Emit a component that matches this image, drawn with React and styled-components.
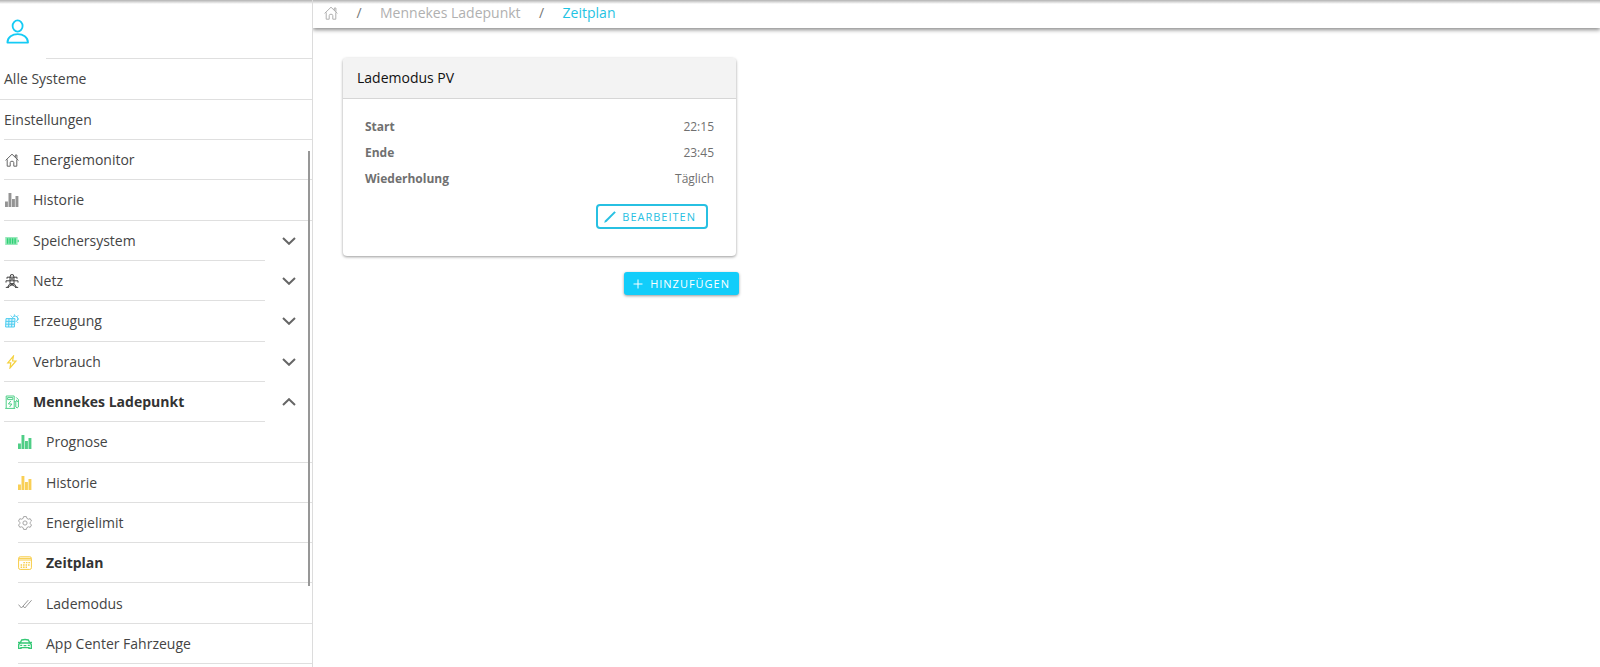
import React, { useState } from "react";

import styled, { createGlobalStyle, css } from "styled-components";

const HomeIcon = () => (
  <Icon viewBox="0 0 14 14" aria-hidden="true">
    <path d="M0.6 7.4 L7 1.2 L13.4 7.4 M10.3 4.2 V2 H11.9 V5.8 M2.2 6.4 V13.2 H5.2 V9.6 Q5.2 8.2 7 8.2 Q8.8 8.2 8.8 9.6 V13.2 H11.8 V6.4" />
  </Icon>
);

const BarsIcon = () => (
  <Icon viewBox="0 0 14 14" $solid aria-hidden="true">
    <rect x="0" y="8.5" width="2.9" height="5.5" />
    <rect x="3.5" y="0" width="2.9" height="14" />
    <rect x="7" y="6" width="2.9" height="8" />
    <rect x="10.5" y="3" width="2.9" height="11" />
  </Icon>
);

const BatteryIcon = () => (
  <Icon viewBox="0 0 14 14" aria-hidden="true">
    <rect x="0.2" y="3" width="12.4" height="8" stroke="none" fill="currentColor" fillOpacity="0.5" />
    <path d="M13.2 5.8 V8.2" />
    <path d="M2.6 4.2 V9.8 M5.1 4.2 V9.8 M7.6 4.2 V9.8 M10.1 4.2 V9.8" strokeWidth="1.5" />
  </Icon>
);

const PylonIcon = () => (
  <Icon viewBox="0 0 14 14" aria-hidden="true">
    <path d="M5 3 L5.8 0.7 H8.2 L9 3 M2 3.2 H12 M1 6.8 H13 M2 3.2 V4.8 M12 3.2 V4.8 M1 6.8 V8.6 M13 6.8 V8.6 M5 3 V9.4 L2.4 13.4 M9 3 V9.4 L11.6 13.4 M5 9.6 H9 M5 9.8 L10.8 12.8 M9 9.8 L3.2 12.8 M0.8 13.4 H4 M10 13.4 H13.2" />
    <path d="M5 3.4 L9 6.6 M9 3.4 L5 6.6" strokeWidth="0.7" />
  </Icon>
);

const SolarIcon = () => (
  <Icon viewBox="0 0 14 14" aria-hidden="true">
    <path d="M1 4.6 H10 L9.4 13 H0.6 Z M0.8 7.4 H9.8 M0.7 10.2 H9.6 M4 4.6 L3.6 13 M7 4.6 L6.6 13" fill="currentColor" fillOpacity="0.2" />
    <path d="M7.4 4 A2.8 2.8 0 1 1 10.6 7.6 M9.4 0.4 V1.8 M5.8 1.6 L6.8 2.8 M13.2 1.4 L12 2.6 M12.6 5 H14 M12 7.8 L13 8.8" />
  </Icon>
);

const BoltIcon = () => (
  <Icon viewBox="0 0 14 14" aria-hidden="true">
    <path d="M8.4 1.2 L2.8 7.8 H5.8 L5 13 L11 6 H7.6 Z" strokeWidth="1.2" />
  </Icon>
);

const ChargerIcon = () => (
  <Icon viewBox="0 0 14 14" aria-hidden="true">
    <path d="M1.2 13.2 V1 H9.2 V13.2 M0.2 13.4 H10.2 M2.6 2.6 H7.8 V4.6 H2.6 Z M9.2 6.6 H10.8 V12 Q12.2 13.8 13.4 12 V4.6 L11.2 2.4 M11.6 4.8 V6.4 H13.4" />
    <path d="M5.8 6 L3.4 9 H6.8 L4.6 12" />
  </Icon>
);

const GearIcon = () => (
  <Icon viewBox="0 0 14 14" aria-hidden="true">
    <path d="M5.6 0.6 H8.4 L8.9 2.4 L10.4 3.2 L12.2 2.7 L13.5 5 L12.2 6.3 V7.7 L13.5 9 L12.2 11.3 L10.4 10.8 L8.9 11.6 L8.4 13.4 H5.6 L5.1 11.6 L3.6 10.8 L1.8 11.3 L0.5 9 L1.8 7.7 V6.3 L0.5 5 L1.8 2.7 L3.6 3.2 L5.1 2.4 Z" />
    <circle cx="7" cy="7" r="2.1" />
  </Icon>
);

const CalendarIcon = () => (
  <Icon viewBox="0 0 14 14" aria-hidden="true">
    <rect x="0.6" y="0.8" width="12.8" height="12.6" rx="1.6" />
    <path d="M0.8 2.4 H13.2 M0.8 4 H13.2" />
    <path d="M5.4 6.6 H12 M2.6 9 H12 M2.6 11.3 H9" strokeWidth="1.4" strokeDasharray="1.5 1" />
  </Icon>
);

const ChecksIcon = () => (
  <Icon viewBox="0 0 14 14" aria-hidden="true">
    <path d="M0.5 7.6 L3.4 11 L10.2 3.2 M5 9 L6.8 11 L13.6 3.2" />
  </Icon>
);

const CarIcon = () => (
  <Icon viewBox="0 0 14 14" aria-hidden="true">
    <path
      d="M2.2 6 L3.6 3 Q7 1.9 10.4 3 L11.8 6 Q13.4 6.6 13.4 8.4 V11.4 H11 V10.6 H3 V11.4 H0.6 V8.4 Q0.6 6.6 2.2 6 H11.8 M0 5.4 H1.8 M12.2 5.4 H14 M2.2 8.4 H4.2 M9.8 8.4 H11.8 M5.6 8.6 H8.4"
      strokeWidth="1.4"
    />
  </Icon>
);

const menuItems = [
  { label: "Energiemonitor", icon: HomeIcon, color: "#666" },
  { label: "Historie", icon: BarsIcon, color: "#949494" },
  { label: "Speichersystem", icon: BatteryIcon, color: "#2fd175", group: true },
  { label: "Netz", icon: PylonIcon, color: "#444", group: true },
  { label: "Erzeugung", icon: SolarIcon, color: "#4fcdf0", group: true },
  { label: "Verbrauch", icon: BoltIcon, color: "#f5d13d", group: true },
  {
    label: "Mennekes Ladepunkt",
    icon: ChargerIcon,
    color: "#4fcf87",
    group: true,
    children: [
      { label: "Prognose", icon: BarsIcon, color: "#4fce86" },
      { label: "Historie", icon: BarsIcon, color: "#f9cf55" },
      { label: "Energielimit", icon: GearIcon, color: "#a5a5a5" },
      { label: "Zeitplan", icon: CalendarIcon, color: "#f7cc45", active: true },
      { label: "Lademodus", icon: ChecksIcon, color: "#999" },
      { label: "App Center Fahrzeuge", icon: CarIcon, color: "#35c876" },
    ],
  },
];

const schedule = [
  { name: "Start", value: "22:15" },
  { name: "Ende", value: "23:45" },
  { name: "Wiederholung", value: "Täglich" },
];

const Sidebar = () => {
  const [open, setOpen] = useState("Mennekes Ladepunkt");

  const toggle = (label) => {
    setOpen((prev) => (prev === label ? "" : label));
  };

  return (
    <SidebarWrapper>
      <Account>
        <AccountButton type="button" aria-label="Konto">
          <svg width="24" height="26" viewBox="0 0 24 26" fill="none" stroke="currentColor" strokeWidth="1.8">
            <ellipse cx="11.6" cy="7" rx="5" ry="5.6" />
            <path d="M1.4 23.6 C1.4 12.2 22 12.2 22 23.6 Z" strokeLinejoin="round" />
          </svg>
        </AccountButton>
      </Account>
      <TopLink href="#systeme">Alle Systeme</TopLink>
      <TopLink href="#einstellungen" $inset>
        Einstellungen
      </TopLink>

      <Menu>
        {menuItems.map((item) => {
          const isOpen = open === item.label;
          return (
            <React.Fragment key={item.label}>
              <MenuRow $group={item.group}>
                {item.group ? (
                  <MenuButton
                    type="button"
                    $bold={isOpen}
                    aria-expanded={isOpen}
                    onClick={() => toggle(item.label)}
                  >
                    <IconBox $color={item.color}>
                      <item.icon />
                    </IconBox>
                    {item.label}
                    <Chevron viewBox="0 0 14 8" $up={isOpen} aria-hidden="true">
                      <path d="M1 1 L7 6.8 L13 1" />
                    </Chevron>
                  </MenuButton>
                ) : (
                  <MenuLink href="#">
                    <IconBox $color={item.color}>
                      <item.icon />
                    </IconBox>
                    {item.label}
                  </MenuLink>
                )}
              </MenuRow>

              {isOpen &&
                item.children?.map((child) => (
                  <MenuRow key={child.label} $sub>
                    <MenuLink href="#" $bold={child.active}>
                      <IconBox $color={child.color}>
                        <child.icon />
                      </IconBox>
                      {child.label}
                    </MenuLink>
                  </MenuRow>
                ))}
            </React.Fragment>
          );
        })}
        <ScrollThumb />
      </Menu>
    </SidebarWrapper>
  );
};

const App = () => {
  return (
    <Page>
      <GlobalStyle />
      <Sidebar />

      <Content>
        <Breadcrumb aria-label="Breadcrumb">
          <Crumb href="#" aria-label="Start">
            <HomeIcon />
          </Crumb>
          <Slash>/</Slash>
          <Crumb href="#">Mennekes Ladepunkt</Crumb>
          <Slash>/</Slash>
          <Crumb href="#" $active aria-current="page">
            Zeitplan
          </Crumb>
        </Breadcrumb>

        <Main>
          <Card>
            <CardTitle>Lademodus PV</CardTitle>
            <CardBody>
              <Schedule>
                {schedule.map((row) => (
                  <ScheduleRow key={row.name}>
                    <dt>{row.name}</dt>
                    <dd>{row.value}</dd>
                  </ScheduleRow>
                ))}
              </Schedule>
              <EditButton type="button">
                <svg width="12" height="12" viewBox="0 0 12 12" aria-hidden="true">
                  <path d="M0.2 11.8 L1 9.6 L10.4 0.2 L11.8 1.6 L2.4 11 Z" fill="currentColor" />
                </svg>
                Bearbeiten
              </EditButton>
            </CardBody>
          </Card>

          <AddButton type="button">
            <svg width="10" height="10" viewBox="0 0 10 10" aria-hidden="true">
              <path d="M5 0.5 V9.5 M0.5 5 H9.5" stroke="currentColor" />
            </svg>
            Hinzufügen
          </AddButton>
        </Main>
      </Content>
    </Page>
  );
};

export default App;

const GlobalStyle = createGlobalStyle`
  * {
    box-sizing: border-box;
  }

  body {
    margin: 0;
    background: #fff;
    color: #444;
    font-family: "Open Sans", "Noto Sans", sans-serif;
    font-size: 14px;
    line-height: 20px;
  }

  a {
    color: inherit;
    text-decoration: none;
  }

  button {
    padding: 0;
    border: 0;
    background: none;
    color: inherit;
    font: inherit;
    cursor: pointer;
  }
`;

const Page = styled.div`
  display: flex;
  min-height: 100vh;
  background: linear-gradient(rgba(0, 0, 0, 0.3), rgba(0, 0, 0, 0)) 0 0 / 100% 4px no-repeat;
`;

const Icon = styled.svg`
  display: block;
  width: 14px;
  height: 14px;
  fill: ${({ $solid }) => ($solid ? "currentColor" : "none")};
  stroke: ${({ $solid }) => ($solid ? "none" : "currentColor")};
`;

const SidebarWrapper = styled.aside`
  display: flex;
  flex-direction: column;
  flex: 0 0 313px;
  padding-bottom: 3px;
  border-right: 1px solid #dcdcdc;
`;

const Account = styled.div`
  display: flex;
  height: 59px;
  padding: 19px 0 0 6px;
  background: linear-gradient(#dfdfdf, #dfdfdf) 46px 100% / 100% 1px no-repeat;
`;

const AccountButton = styled.button`
  height: 26px;
  color: #14cbf5;
`;

const TopLink = styled.a`
  display: flex;
  align-items: center;
  height: ${({ $inset }) => ($inset ? "40px" : "41px")};
  margin-left: ${({ $inset }) => ($inset ? "4px" : "0")};
  padding-left: ${({ $inset }) => ($inset ? "0" : "4px")};
  border-bottom: 1px solid #dfdfdf;
`;

const Menu = styled.nav`
  position: relative;
  display: flex;
  flex-direction: column;
  flex: 1;
`;

const MenuRow = styled.div`
  display: flex;
  flex: 1 0 40px;
  max-height: 41px;
  margin-left: ${({ $sub }) => ($sub ? "18px" : "4px")};
  padding-left: ${({ $sub }) => ($sub ? "0" : "1px")};
  background: linear-gradient(#dfdfdf, #dfdfdf) 0 100% / ${({ $group }) => ($group ? "calc(100% - 47px)" : "100%")} 1px
    no-repeat;
`;

const menuEntry = css`
  display: flex;
  align-items: center;
  flex: 1;
  gap: 14px;
  text-align: left;
  font-weight: ${({ $bold }) => ($bold ? 700 : 400)};
  color: ${({ $bold }) => ($bold ? "#333" : "#444")};
`;

const MenuLink = styled.a`
  ${menuEntry}
`;

const MenuButton = styled.button`
  ${menuEntry}
  padding-right: 16px;
`;

const IconBox = styled.span`
  color: ${({ $color }) => $color};
`;

const Chevron = styled.svg`
  width: 14px;
  height: 8px;
  margin-left: auto;
  fill: none;
  stroke: #666;
  stroke-width: 2;
  transform: ${({ $up }) => ($up ? "rotate(180deg)" : "none")};
`;

const ScrollThumb = styled.span`
  position: absolute;
  top: 11px;
  right: 2px;
  bottom: 78px;
  width: 2px;
  background: #979797;
`;

const Content = styled.div`
  flex: 1;
  min-width: 0;
`;

const Breadcrumb = styled.nav`
  display: flex;
  align-items: center;
  height: 28px;
  padding: 0 11px 2px;
  box-shadow: 0 2px 4px rgba(0, 0, 0, 0.45);
  clip-path: inset(0 0 -8px 0);
`;

const Crumb = styled.a`
  color: ${({ $active }) => ($active ? "#1fc3e3" : "#b0b0b0")};
`;

const Slash = styled.span`
  width: 42px;
  text-align: center;
  color: #777;
`;

const Main = styled.main`
  display: flex;
  flex-direction: column;
  align-items: flex-end;
  max-width: 456px;
  padding: 30px;
`;

const Card = styled.section`
  align-self: stretch;
  margin-right: 3px;
  border-radius: 4px;
  overflow: hidden;
  box-shadow: 0 1px 3px rgba(0, 0, 0, 0.4);
`;

const CardTitle = styled.h2`
  margin: 0;
  padding: 10px 14px;
  border-bottom: 1px solid #d6d6d6;
  background: #f3f3f3;
  color: #111;
  font-size: 14px;
  font-weight: 400;
`;

const CardBody = styled.div`
  display: flex;
  flex-direction: column;
  align-items: flex-end;
  padding: 15px 22px 27px;
`;

const Schedule = styled.dl`
  align-self: stretch;
  margin: 0 0 12px;
`;

const ScheduleRow = styled.div`
  display: flex;
  justify-content: space-between;
  line-height: 26px;
  font-size: 12px;
  color: #707070;

  dt {
    font-weight: 700;
  }

  dd {
    margin: 0;
  }
`;

const EditButton = styled.button`
  display: flex;
  align-items: center;
  gap: 6px;
  height: 25px;
  margin-right: 6px;
  padding: 0 10px 0 6px;
  border: 2px solid #27c0e2;
  border-radius: 4px;
  color: #27c0e2;
  font-size: 11px;
  letter-spacing: 1px;
  text-transform: uppercase;
`;

const AddButton = styled.button`
  display: flex;
  align-items: center;
  gap: 7px;
  height: 23px;
  margin-top: 16px;
  padding: 0 9px;
  border-radius: 3px;
  background: #12cdfa;
  color: #fff;
  font-size: 11px;
  letter-spacing: 1px;
  text-transform: uppercase;
  box-shadow: 0 1px 3px rgba(0, 0, 0, 0.4);
`;
